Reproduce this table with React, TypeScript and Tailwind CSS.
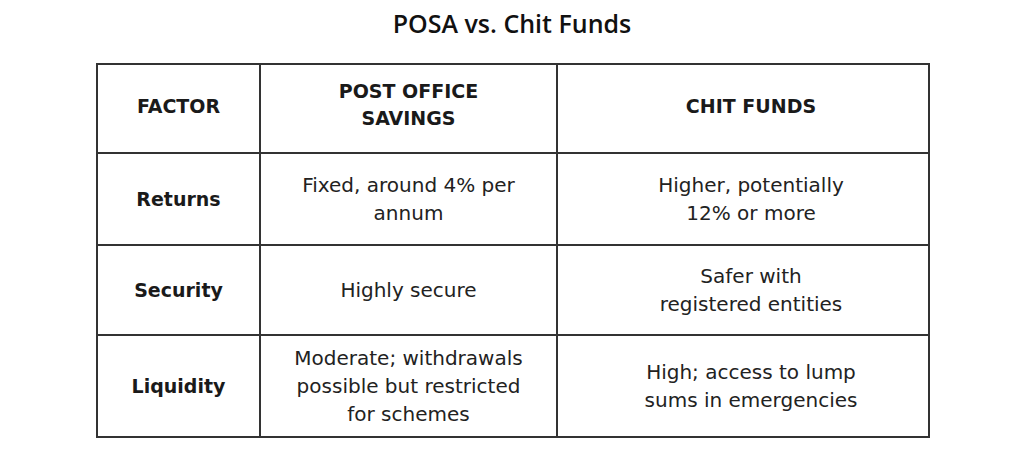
const rows = [
  { factor: "Returns", posa: ["Fixed, around 4% per", "annum"], chit: ["Higher, potentially", "12% or more"], h: "h-[92px]" },
  { factor: "Security", posa: ["Highly secure"], chit: ["Safer with", "registered entities"], h: "h-[90px]" },
  {
    factor: "Liquidity",
    posa: ["Moderate; withdrawals", "possible but restricted", "for schemes"],
    chit: ["High; access to lump", "sums in emergencies"],
    h: "h-[102px]",
  },
];

export default function App() {
  return (
    <div className="w-[1024px] h-[455px] bg-white text-[#1a1a1a] [font-family:'DejaVu_Sans',sans-serif]">
      <h1 className="h-[63px] pt-[6px] text-center text-[25px] font-semibold leading-[34px] [font-family:'Open_Sans',sans-serif] text-[#111]">
        POSA vs. Chit Funds
      </h1>
      <table className="ml-[96px] w-[832px] border-collapse table-fixed">
        <colgroup>
          <col className="w-[163px]" />
          <col className="w-[297px]" />
          <col className="w-[372px]" />
        </colgroup>
        <thead>
          <tr className="h-[89px]">
            <th className="border-2 border-[#333] text-[19px] font-bold leading-[27px] pb-1">FACTOR</th>
            <th className="border-2 border-[#333] text-[19px] font-bold leading-[27px] pb-2">
              POST OFFICE
              <br />
              SAVINGS
            </th>
            <th className="border-2 border-[#333] text-[19px] font-bold leading-[27px] pl-4 pb-1">CHIT FUNDS</th>
          </tr>
        </thead>
        <tbody>
          {rows.map((r) => (
            <tr key={r.factor} className={r.h}>
              <td className="border-2 border-[#333] text-center text-[19px] font-bold">{r.factor}</td>
              <td className="border-2 border-[#333] text-center text-[20px] leading-[28px] text-[#222]">
                {r.posa.map((l) => (
                  <div key={l}>{l}</div>
                ))}
              </td>
              <td className="border-2 border-[#333] text-center text-[20px] leading-[28px] text-[#222] pl-4">
                {r.chit.map((l) => (
                  <div key={l}>{l}</div>
                ))}
              </td>
            </tr>
          ))}
        </tbody>
      </table>
    </div>
  );
}
